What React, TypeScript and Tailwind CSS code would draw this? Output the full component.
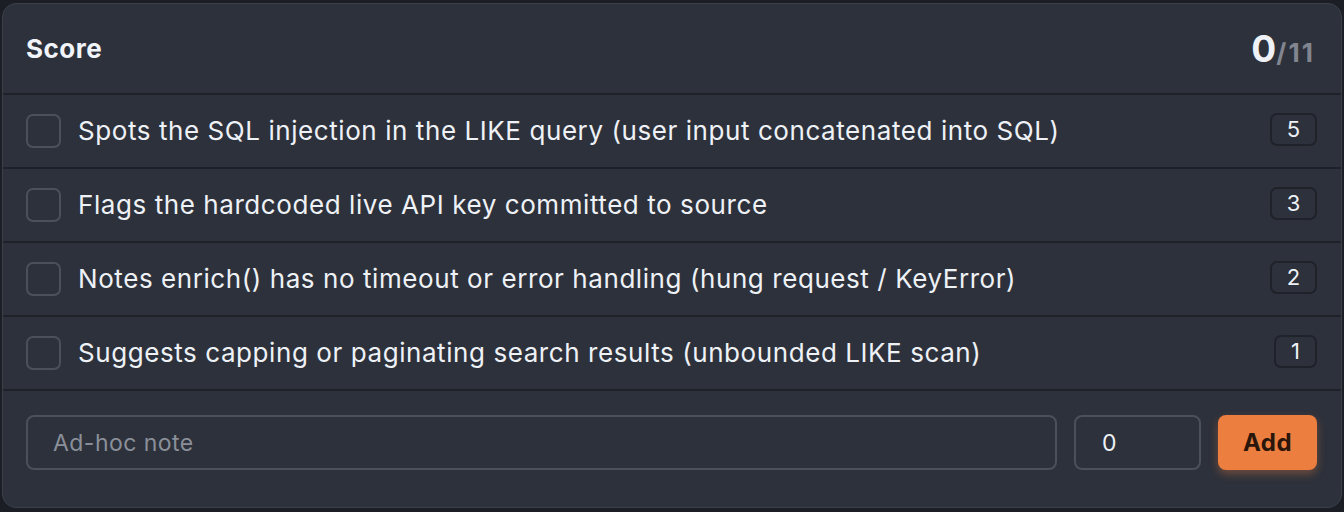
import { useState } from "react";

type Criterion = Readonly<{ label: string; points: number }>;

const criteria: Criterion[] = [
  { label: "Spots the SQL injection in the LIKE query (user input concatenated into SQL)", points: 5 },
  { label: "Flags the hardcoded live API key committed to source", points: 3 },
  { label: "Notes enrich() has no timeout or error handling (hung request / KeyError)", points: 2 },
  { label: "Suggests capping or paginating search results (unbounded LIKE scan)", points: 1 },
];

export default function App() {
  const [checked, setChecked] = useState<boolean[]>(criteria.map(() => false));
  const total = criteria.reduce((sum, c) => sum + c.points, 0);
  const score = criteria.reduce((sum, c, i) => (checked[i] ? sum + c.points : sum), 0);

  return (
    <div className="h-[512px] w-[1344px] bg-[#1b1e24] px-[2px] pt-[3px] pb-[4px] font-['Inter',sans-serif]">
      <div className="flex h-full flex-col overflow-hidden rounded-[14px] border border-[#3a3f4a] bg-[#2d313b]">
        <div className="flex h-[89px] shrink-0 items-center justify-between pl-[23px] pr-[26px]">
          <h2 className="text-[26px] font-bold tracking-[0.02em] text-[#f1f4f8]">Score</h2>
          <div className="flex items-baseline font-bold">
            <span className="text-[37px] leading-none text-[#eef1f5]">{score}</span>
            <span className="text-[26px] leading-none tracking-[0.08em] text-[#80858f]">/{total}</span>
          </div>
        </div>

        {criteria.map((c, i) => (
          <div
            key={c.label}
            className="flex h-[74px] shrink-0 items-center border-t-2 border-[#1e2127] pl-[23px] pr-[24px]"
          >
            <button
              type="button"
              onClick={() =>
                setChecked((prev) => prev.map((v, j) => (j === i ? !v : v)))
              }
              className={
                checked[i]
                  ? "h-[34px] w-[35px] shrink-0 rounded-[7px] border-2 border-[#e87c3e] bg-[#e87c3e]"
                  : "h-[34px] w-[35px] shrink-0 rounded-[7px] border-2 border-[#4b505b]"
              }
            />
            <span className="ml-[17px] flex-1 pb-[2px] text-[26px] tracking-[0.022em] text-[#eef1f6]">{c.label}</span>
            <span
              className={
                c.points === 1
                  ? "mb-[4px] flex h-[33px] w-[43px] items-center justify-center rounded-[7px] border-2 border-[#1f2228] text-[22px] text-[#eef1f6]"
                  : "mb-[4px] flex h-[33px] w-[47px] items-center justify-center rounded-[7px] border-2 border-[#1f2228] text-[22px] text-[#eef1f6]"
              }
            >
              {c.points}
            </span>
          </div>
        ))}

        <div className="flex flex-1 items-start gap-[17px] border-t-2 border-[#1e2127] pl-[23px] pr-[24px] pt-[24px]">
          <input
            placeholder="Ad-hoc note"
            className="h-[55px] flex-1 rounded-[8px] border-2 border-[#4b505b] bg-transparent px-[25px] text-[23px] tracking-[0.02em] text-[#eef1f6] placeholder:text-[#8a8f99] outline-none"
          />
          <input
            defaultValue="0"
            className="h-[55px] w-[127px] rounded-[8px] border-2 border-[#4b505b] bg-transparent px-[26px] text-[23px] text-[#eef1f6] outline-none"
          />
          <button
            type="button"
            className="h-[55px] w-[99px] rounded-[8px] bg-[#ec7e3f] text-[24px] font-bold tracking-[0.02em] text-[#2a160a] shadow-[0_4px_8px_rgba(236,126,63,0.35)]"
          >
            Add
          </button>
        </div>
      </div>
    </div>
  );
}
